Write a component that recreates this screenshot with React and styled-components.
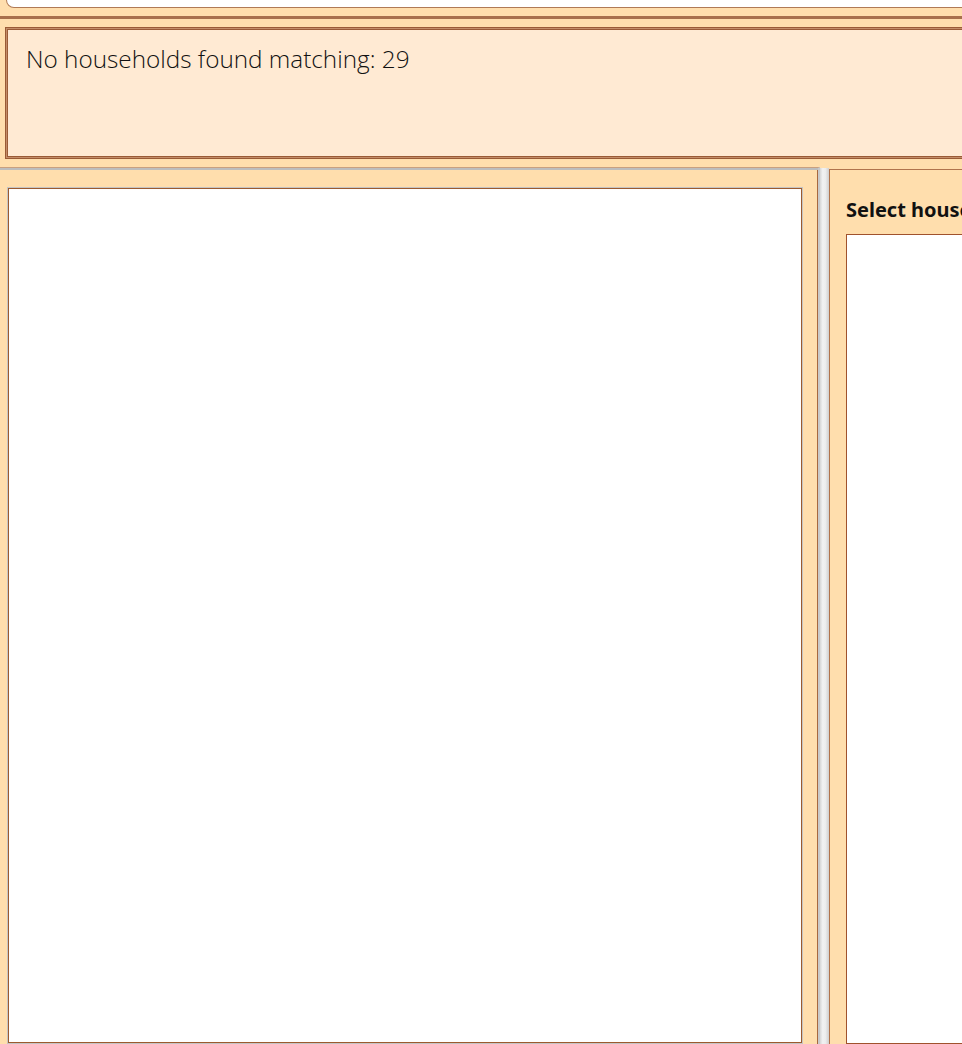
import React from "react";
import styled, { createGlobalStyle } from "styled-components";

const Global = createGlobalStyle`
  *, *::before, *::after { box-sizing: border-box; }
  html, body { margin: 0; padding: 0; background: #FFDEAD; overflow: hidden; }
  #root { height: 1044px; }
`;

const Shell = styled.div`
  height: 1044px;
  display: flex;
  flex-direction: column;
  background: #FFDEAD;
  overflow: hidden;
  font-family: "Segoe UI", "Open Sans", "Noto Sans", sans-serif;
`;

const SearchStrip = styled.div`
  padding: 0 0 8px 6px;
  border-bottom: 3px solid #A8704C;
`;

const SearchBox = styled.div`
  height: 8px;
  margin-right: -20px;
  background: #fff;
  border: 1px solid #B07A55;
  border-top: none;
  border-bottom-left-radius: 8px;
`;

const ResultsWrap = styled.div`
  padding: 8px 0 8px 5px;
`;

const ResultsPanel = styled.div`
  height: 132px;
  margin-right: -20px;
  background: #FFEAD3;
  border: 1px solid #9A5B36;
  box-shadow: inset 0 0 0 1px #C48D68, inset 0 0 0 2px #9A5B36;
  padding: 14px 20px;
`;

const Message = styled.div`
  font-family: "Segoe UI Light", "Open Sans", sans-serif;
  font-weight: 300;
  font-size: 24.3px;
  color: #111;
`;

const Work = styled.div`
  flex: 1;
  display: flex;
  min-height: 0;
`;

const LeftPane = styled.div`
  width: 820px;
  flex: none;
  border-top: 1px solid #C8A080;
  border-right: 2px solid #C9C9C9;
  box-shadow: inset 0 2px 0 #BDBDBD, inset -1px 0 0 #A6683F;
  padding: 19px 15px 0 7px;
  display: flex;
`;

const ListBox = styled.div`
  flex: 1;
  background: #fff;
  border: 1px solid #C4C4C4;
  box-shadow: inset 0 0 0 1px #9C5A2E;
`;

const Splitter = styled.div`
  width: 9px;
  flex: none;
  margin-top: 1px;
  background: linear-gradient(to right, #D6D6D6 0%, #F2F2F2 30%, #EDEDED 60%, #CFCFCF 100%);
`;

const RightPane = styled.div`
  flex: 1;
  min-width: 0;
  margin-top: 2px;
  border-top: 1px solid #B0734C;
  border-left: 1px solid #B0734C;
  padding: 28px 0 0 16px;
  display: flex;
  flex-direction: column;
  gap: 12px;
`;

const PaneTitle = styled.div`
  font-family: "Segoe UI", "Noto Sans", sans-serif;
  font-weight: 700;
  font-size: 20px;
  color: #111;
  white-space: nowrap;
  line-height: 24px;
`;

const HouseList = styled.div`
  flex: 1;
  margin-right: -20px;
  background: #fff;
  border: 1px solid #A0522D;
`;

export default function App() {
  return (
    <>
      <Global />
      <Shell>
        <SearchStrip>
          <SearchBox />
        </SearchStrip>
        <ResultsWrap>
          <ResultsPanel>
            <Message>No households found matching: 29</Message>
          </ResultsPanel>
        </ResultsWrap>
        <Work>
          <LeftPane>
            <ListBox />
          </LeftPane>
          <Splitter />
          <RightPane>
            <PaneTitle>Select household</PaneTitle>
            <HouseList />
          </RightPane>
        </Work>
      </Shell>
    </>
  );
}
